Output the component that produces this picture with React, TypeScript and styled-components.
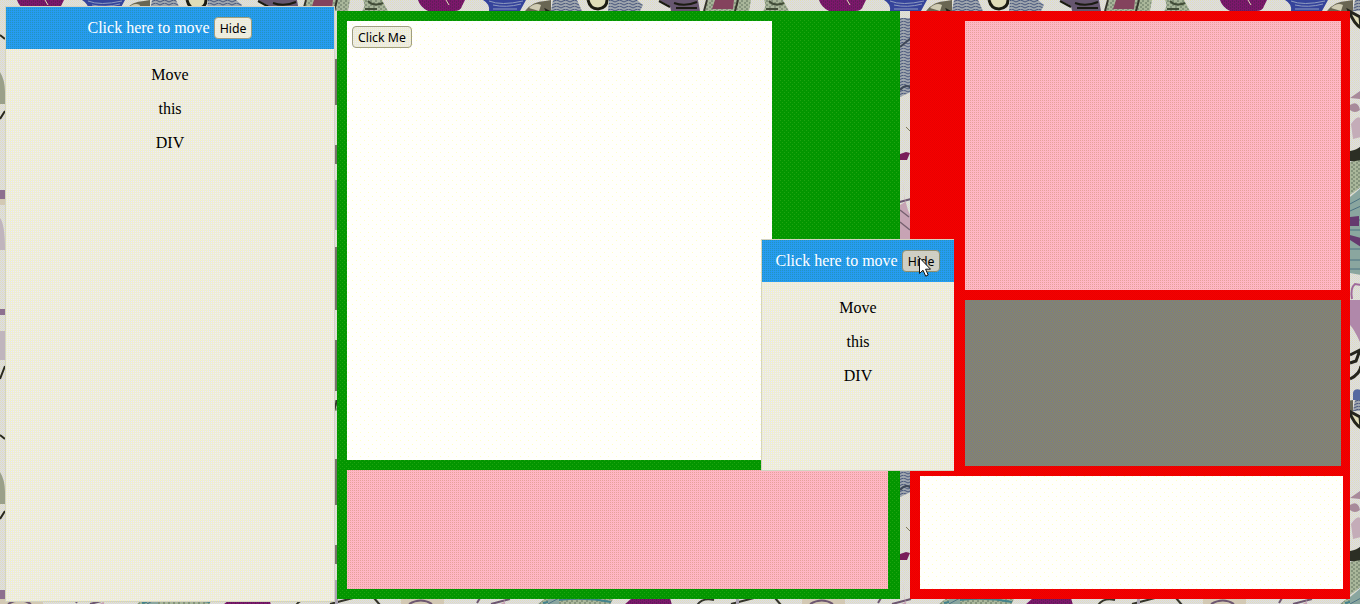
import React from 'react';
import styled, { createGlobalStyle, css } from 'styled-components';

const GlobalStyle = createGlobalStyle`
    * {
        box-sizing: border-box;
    }
    body {
        margin: 0;
        overflow: hidden;
        font-family: 'Liberation Serif', serif;
        font-size: 16px;
        line-height: 18px;
        color: #000;
    }
`;

// 2x2 pixel weave: top left, top right, bottom right, bottom left
const weave = (tl: string, tr: string, br: string, bl: string) => css`
    background: conic-gradient(${tr} 0 25%, ${br} 0 50%, ${bl} 0 75%, ${tl} 0) 0 0 / 2px 2px fixed;
`;

// single pixels in staggered rows
const speckle = (fill: string, dot: string, size: number) => css`
    background:
        radial-gradient(circle at 0.5px 0.5px, ${dot} 0.6px, transparent 0.7px) 0 0 / ${size}px ${size}px fixed,
        radial-gradient(circle at 0.5px 0.5px, ${dot} 0.6px, transparent 0.7px) ${size / 2}px ${size / 2}px / ${size}px
            ${size}px fixed,
        ${fill};
`;

const fills = {
    white: speckle('#fffffc', '#ffffc4', 8),
    green: speckle('#039600', '#20a410', 4),
    red: weave('#e80000', '#f60000', '#ea0000', '#f60000'),
    pink: weave('#e6a298', '#ffb6c8', '#ffb6c0', '#ffb6c8'),
    gray: weave('#8f8f55', '#747496', '#8f8f55', '#747496'),
    blue: weave('#249ab8', '#2494f8', '#28a4ea', '#2494f8'),
    paper: weave('#fbf9b4', '#e0e0f4', '#fbf9d8', '#e0e0f4'),
    hover: weave('#d8d8a8', '#c6c6d4', '#d8d8c0', '#c6c6d4'),
};

const Page = styled.div`
    position: relative;
    display: flex;
    align-items: flex-start;
    width: 1360px;
    height: 604px;
    padding: 6px 10px 0 5px;
    overflow: hidden;
    isolation: isolate;
    ${weave('#e2e0b6', '#dadaea', '#e0dfc8', '#dadaea')}
`;

const Wallpaper = styled.svg`
    position: absolute;
    inset: 0;
    z-index: -1;
`;

const Panel = styled.section<{ $floating?: boolean }>`
    flex: none;
    width: 330px;
    height: 596px;
    border: 1px solid #d3d3c0;
    text-align: center;
    ${fills.paper}
    ${({ $floating }) =>
        $floating &&
        css`
            position: absolute;
            left: 761px;
            top: 239px;
            width: 193px;
            height: 232px;
            border-right-width: 0;
        `}
`;

const PanelHeader = styled.header`
    display: flex;
    align-items: center;
    justify-content: center;
    gap: 4px;
    height: 42px;
    margin-bottom: 17px;
    color: #fff;
    ${fills.blue}
`;

const Line = styled.p`
    margin: 0 0 16px;
`;

const Button = styled.button<{ $hover?: boolean }>`
    height: 22px;
    padding: 1px 5px 0;
    border: 1px solid ${({ $hover }) => ($hover ? '#8f8f70' : '#a09e80')};
    border-radius: 4px;
    font: 12.3px/19px 'Noto Sans', sans-serif;
    color: #000;
    ${({ $hover }) => ($hover ? fills.hover : fills.paper)}
`;

const Board = styled.main<{ $tone: 'green' | 'red' }>`
    display: flex;
    flex: none;
    flex-direction: column;
    gap: 10px;
    width: ${({ $tone }) => ($tone === 'green' ? 563 : 440)}px;
    height: 588px;
    margin: 5px 0 0 ${({ $tone }) => ($tone === 'green' ? 2 : 10)}px;
    padding: 10px;
    ${({ $tone }) => fills[$tone]}
`;

const Box = styled.div<{ $w: number; $h: number; $indent?: number; $fill: 'white' | 'pink' | 'gray' }>`
    flex: none;
    width: ${({ $w }) => $w}px;
    height: ${({ $h }) => $h}px;
    margin-left: ${({ $indent = 0 }) => $indent}px;
    padding: 5px;
    line-height: 0;
    ${({ $fill }) => fills[$fill]}
`;

const Cursor = styled.svg`
    position: absolute;
    left: 919px;
    top: 257px;
`;

const MovePanel = ({ floating }: { floating?: boolean }) => (
    <Panel $floating={floating}>
        <PanelHeader>
            <span>Click here to move</span>
            <Button $hover={floating}>Hide</Button>
        </PanelHeader>
        {['Move', 'this', 'DIV'].map(text => (
            <Line key={text}>{text}</Line>
        ))}
    </Panel>
);

// doodled crowd, repeated over the whole page
const Crowd = () => (
    <Wallpaper width="1360" height="604">
        <defs>
            <pattern id="stripes" width="9" height="3" patternUnits="userSpaceOnUse">
                <rect width="9" height="3" fill="#9ea5ad" />
                <path d="M0 1Q3 -1 5 1T9 1" fill="none" stroke="#48567c" />
            </pattern>
            <pattern id="knit" width="5" height="4" patternUnits="userSpaceOnUse">
                <rect width="5" height="4" fill="#a9b69a" />
                <path d="M0 1h2M3 3h2" stroke="#62725f" />
            </pattern>
            <pattern id="plum" width="4" height="3" patternUnits="userSpaceOnUse">
                <rect width="4" height="3" fill="#7d176c" />
                <path d="M1 1h1M3 2h1" stroke="#492048" />
            </pattern>
            <pattern id="crowd" width="401" height="400" patternUnits="userSpaceOnUse">
                {/* upper row of shirts */}
                <path d="M17 0H64L61 6Q60 11 53 11H27Q19 7 17 0Z" fill="url(#plum)" />
                <path d="M45 0L48 5" stroke="#dfdcb8" />
                <path d="M82 0H125L119 11H88Q89 4 82 0Z" fill="#35439b" />
                <path d="M88 1Q100 6 122 1M92 5Q105 8 120 4M92 9H116" fill="none" stroke="#8d9ac0" />
                <path d="M124 11Q132 1 144 1L150 0V11Z" fill="#696653" />
                <path d="M128 8Q134 2 140 5L138 11Z" fill="#cfcbb2" />
                <path d="M152 0H176L181 11H150Z" fill="url(#stripes)" />
                <path d="M187 0Q189 9 197 9Q206 8 206 0" fill="#dfdcb8" stroke="#1b1b12" strokeWidth="3" />
                <path d="M208 0H236L242 5L239 11H207Z" fill="url(#stripes)" />
                <path d="M258 0L269 6L270 11H299L297 0Z" fill="#66566f" />
                <path d="M258 1L269 7M273 3Q284 7 296 2M275 8H296" fill="none" stroke="#1b1b12" strokeWidth="2" />
                <path d="M307 0H350L348 11H303Z" fill="url(#knit)" />
                <path d="M314 0H333L332 9H311Z" fill="#84435d" />
                <path d="M306 0L303 11M337 0L334 11" stroke="#35352b" strokeWidth="2" />
                <path d="M363 0H382L388 11H362Q366 6 363 0Z" fill="url(#knit)" />
                <path d="M368 1Q374 7 383 3M365 9H377" fill="none" stroke="#424d38" strokeWidth="2" />
                {/* row along the bottom edge of the page */}
                <path d="M0 198H43V205H0Z" fill="#d3c9b4" />
                <path d="M8 204Q20 197 31 204M76 203L79 198M90 204L109 199" fill="none" stroke="#6d5770" strokeWidth="2" />
                <path d="M137 204L146 197H213L209 205H137Z" fill="url(#knit)" />
                <path d="M142 203Q175 195 210 202" fill="none" stroke="#43838c" strokeWidth="2" />
                <path d="M223 205L231 198H269L271 205Z" fill="url(#plum)" />
                <path d="M296 205Q302 197 313 200M330 204L353 198M374 198L380 205" fill="none" stroke="#35352b" strokeWidth="2" />
                {/* left edge */}
                <path d="M0 72Q5 80 5 92V104H0Z" fill="#9aa08a" />
                <path d="M0 35L5 39M0 119L5 111M0 379L5 366" fill="none" stroke="#29291d" strokeWidth="2" />
                <path d="M0 190H5V199H0ZM0 309H5V315H0Z" fill="#8d7090" />
                <path d="M0 218Q5 224 5 250H0ZM0 331H5V360H0Z" fill="#c0b5bd" />
                {/* gap beside the left panel */}
                <path d="M335 59H338V105H335ZM335 145H338V164H335ZM335 247H338V310H335ZM335 340H338V391H335Z" fill="#77736b" />
                <path d="M335 180H338V230H335Z" fill="#aaa3b1" />
                {/* gap between the boards */}
                <path d="M98 18H109V92L98 97Z" fill="url(#stripes)" />
                <path d="M98 47L109 38M98 90Q104 83 109 88" fill="none" stroke="#3e4757" strokeWidth="2" />
                <path d="M104 127L109 132" stroke="#77736b" />
                <path d="M98 154L104 152L108 153L105 160H98Z" fill="#7a1d59" />
                <path d="M101 180Q102 204 109 217V240H98V205L103 202Z" fill="#c7a3b4" />
                <path d="M98 210L107 217M98 222L108 230" fill="none" stroke="#76606f" strokeWidth="1.5" />
                {/* right edge */}
                <path d="M146 11Q151 24 158 28L157 17Z" fill="#dfdcb8" stroke="#24241c" strokeWidth="3" />
                <path d="M147 98L157 91V99ZM147 105Q155 100 157 110Q152 114 147 110Z" fill="#a88b9a" />
                <path d="M148 124Q155 114 158 119V137L150 139Z" fill="#c4acb8" />
                <path d="M147 151Q154 150 158 146V163L147 161Z" fill="#2c2e24" />
                <path d="M147 162L158 160V187L147 195Z" fill="url(#knit)" />
                <path d="M147 197L158 188V275L147 273Z" fill="#8aa69f" />
                <path d="M147 204L158 198M147 211L158 206M147 220H158M147 230H158M147 249H158M147 260H158M147 269H158" stroke="#4b7181" />
                <path d="M147 217L156 216V226H147ZM147 235L158 238V247L147 240Z" fill="#65396e" />
                <path d="M149 299Q147 288 152 284L158 285" fill="none" stroke="#a06a9a" strokeWidth="2" />
                <path d="M147 300L157 300V342Q151 329 147 325Z" fill="#b088aa" />
                <path d="M147 355L157 350L153 361L147 363M147 379Q157 374 158 366" fill="none" stroke="#24241c" strokeWidth="3" />
                <path d="M150 396Q149 387 158 390V400H150Z" fill="#5569a0" />
            </pattern>
        </defs>
        <rect width="1360" height="604" fill="url(#crowd)" />
    </Wallpaper>
);

const App = () => (
    <>
        <GlobalStyle />
        <Page>
            <Crowd />
            <MovePanel />
            <Board $tone="green">
                <Box $w={425} $h={439} $fill="white">
                    <Button>Click Me</Button>
                </Box>
                <Box $w={541} $h={119} $fill="pink" />
            </Board>
            <Board $tone="red">
                <Box $w={376} $h={269} $indent={45} $fill="pink" />
                <Box $w={376} $h={166} $indent={45} $fill="gray" />
                <Box $w={423} $h={113} $fill="white" />
            </Board>
            <MovePanel floating />
            <Cursor width="12" height="20" viewBox="0 0 12 20">
                <path d="M.5 .8V16.5L4 13.2L6.7 19.2L9.2 18L6.6 12.2H11.5Z" fill="#fff" stroke="#111" />
            </Cursor>
        </Page>
    </>
);

export default App;
